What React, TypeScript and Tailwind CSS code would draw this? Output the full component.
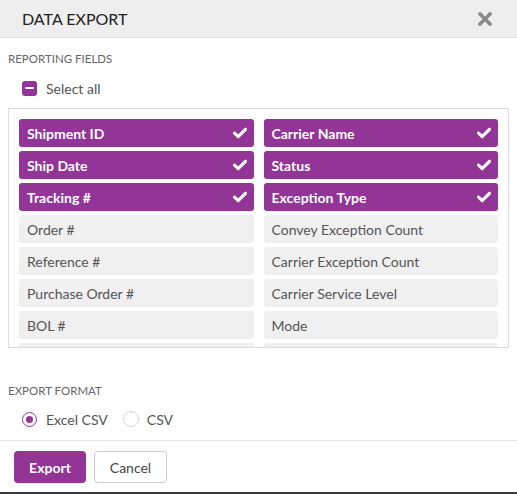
import React from "react";

const left = [
  { label: "Shipment ID", on: true },
  { label: "Ship Date", on: true },
  { label: "Tracking #", on: true },
  { label: "Order #", on: false },
  { label: "Reference #", on: false },
  { label: "Purchase Order #", on: false },
  { label: "BOL #", on: false },
  { label: "", on: false },
];
const right = [
  { label: "Carrier Name", on: true },
  { label: "Status", on: true },
  { label: "Exception Type", on: true },
  { label: "Convey Exception Count", on: false },
  { label: "Carrier Exception Count", on: false },
  { label: "Carrier Service Level", on: false },
  { label: "Mode", on: false },
  { label: "", on: false },
];

function Check() {
  return (
    <svg width="14" height="12" viewBox="0 0 14 12" fill="none">
      <path d="M1.6 6.2 L5.2 9.6 L12.5 2.3" stroke="white" strokeWidth="3.2" strokeLinecap="round" strokeLinejoin="round" />
    </svg>
  );
}

function Row({ label, on }: { label: string; on: boolean }) {
  return on ? (
    <div className="h-[28px] rounded-[3px] bg-[#933497] flex items-center justify-between pl-[8px] pr-[7px] text-white font-bold text-[14px]">
      <span>{label}</span>
      <Check />
    </div>
  ) : (
    <div className="h-[28px] rounded-[3px] bg-[#f0f0f0] flex items-center pl-[8px] text-[#555555] text-[14px]">
      <span>{label}</span>
    </div>
  );
}

export default function App() {
  const rows: { label: string; on: boolean }[] = [];
  left.forEach((l, i) => {
    rows.push(l);
    rows.push(right[i]);
  });
  return (
    <div className="w-[517px] h-[494px] bg-white flex flex-col overflow-hidden" style={{ fontFamily: "Lato, 'Liberation Sans', sans-serif" }}>
      <div className="h-[38px] shrink-0 bg-[#eeeeee] border-b border-[#dedede] flex items-center justify-between pl-[22px] pr-[25px]">
        <span className="text-[16px] text-[#222222]">DATA EXPORT</span>
        <svg width="14" height="14" viewBox="0 0 14 14">
          <path d="M2 2 L12 12 M12 2 L2 12" stroke="#8a8a8a" strokeWidth="3.6" strokeLinecap="square" />
        </svg>
      </div>
      <div className="px-[8px] pt-[14px] flex-1 flex flex-col">
        <div className="text-[11.5px] leading-[14px] text-[#666666]">REPORTING FIELDS</div>
        <div className="flex items-center gap-[9px] pl-[14px] mt-[14px] h-[16px]">
          <div className="w-[15px] h-[15px] rounded-[3px] bg-[#933497] flex items-center justify-center">
            <div className="w-[9px] h-[2.5px] bg-white rounded-[1px]" />
          </div>
          <span className="text-[14px] text-[#555555]">Select all</span>
        </div>
        <div className="mt-[12px] h-[240px] border border-[#dddddd] p-[10px] overflow-hidden">
          <div className="grid grid-cols-2 gap-x-[10px] gap-y-[4px]">
            {rows.map((r, i) => (
              <Row key={i} label={r.label} on={r.on} />
            ))}
          </div>
        </div>
        <div className="mt-[36px] text-[11.5px] leading-[14px] text-[#666666]">EXPORT FORMAT</div>
        <div className="flex items-center pl-[14px] mt-[13px] h-[16px]">
          <div className="w-[15px] h-[15px] rounded-full border border-[#933497] flex items-center justify-center">
            <div className="w-[7px] h-[7px] rounded-full bg-[#933497]" />
          </div>
          <span className="ml-[9px] text-[14px] text-[#555555]">Excel CSV</span>
          <div className="ml-[15px] w-[16px] h-[16px] rounded-full border border-[#d8d8d8]" />
          <span className="ml-[8px] text-[14px] text-[#555555]">CSV</span>
        </div>
      </div>
      <div className="shrink-0 border-t border-[#e5e5e5] h-[52px] flex items-start pt-[10px] pl-[14px] gap-[8px]">
        <button className="w-[72px] h-[32px] rounded-[4px] bg-[#933497] text-white text-[14px] font-bold">Export</button>
        <button className="w-[73px] h-[32px] rounded-[4px] bg-white border border-[#cccccc] text-[#444444] text-[14px]">Cancel</button>
      </div>
      <div className="h-[2px] shrink-0 bg-[#3a3a3a]" />
    </div>
  );
}
